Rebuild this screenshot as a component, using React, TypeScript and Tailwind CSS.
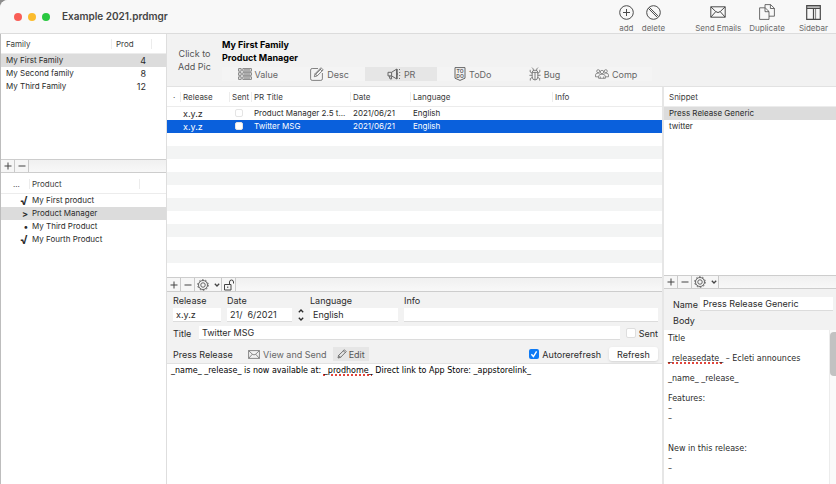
import type { ReactNode } from "react";
import clsx from "clsx";

interface ButtonProps {
  label: string;
  children: ReactNode;
}

const families = [
  { name: "My First Family", prod: 4 },
  { name: "My Second family", prod: 8 },
  { name: "My Third Family", prod: 12 },
];

const products = [
  { mark: "√", name: "My First product" },
  { mark: ">", name: "Product Manager" },
  { mark: "•", name: "My Third Product" },
  { mark: "√", name: "My Fourth Product" },
];

const releases = [
  { release: "x.y.z", title: "Product Manager 2.5 t...", date: "2021/06/21", language: "English" },
  { release: "x.y.z", title: "Twitter MSG", date: "2021/06/21", language: "English" },
];

const snippets = ["Press Release Generic", "twitter"];

const EnvelopeIcon = ({ className }: { className: string }) => (
  <svg className={className} viewBox="0 0 16 12" fill="none" stroke="currentColor" strokeLinejoin="round">
    <path d="M.8.8h14.4v10.4H.8z M.8.8l5 4.8q2.2 1.9 4.4 0l5-4.8 M.8 11.2l5-5.6 M15.2 11.2l-5-5.6" />
  </svg>
);

const GearIcon = () => (
  <svg className="size-3" viewBox="0 0 24 24" fill="none" stroke="currentColor" strokeWidth="1.6">
    <circle cx="12" cy="12" r="9" />
    <circle cx="12" cy="12" r="4.5" />
    <circle cx="12" cy="12" r="10.6" strokeWidth="1.6" strokeDasharray="3.33 3.33" />
  </svg>
);

const ChevronIcon = ({ up = false }: { up?: boolean }) => (
  <svg className="h-1 w-1.5" viewBox="0 0 6 4" fill="none" stroke="currentColor" strokeWidth="1.3">
    <path d={up ? "M.8 3.2L3 1l2.2 2.2" : "M.8.8L3 3 5.2.8"} />
  </svg>
);

const PencilIcon = () => (
  <svg className="size-2.5" viewBox="0 0 10 10" fill="none" stroke="currentColor" strokeWidth=".8" strokeLinejoin="round">
    <path d="M1 9l.6-2.6L7.4.8l1.8 1.8L3.5 8.4zM6.4 1.8l1.8 1.8M1.6 6.4l2 2" />
  </svg>
);

const tabs = [
  {
    name: "Value",
    icon: (
      <svg className="h-3 w-3.5" viewBox="0 0 14 12" fill="none" stroke="currentColor" strokeWidth=".8">
        <path d="M.6.6h2.6v2.6H.6zM.6 4.7h2.6v2.6H.6zM.6 8.8h2.6v2.6H.6zM4.8.6h8.6v2.6H4.8zM4.8 4.7h8.6v2.6H4.8zM4.8 8.8h8.6v2.6H4.8zM6 1.9h6M6 6h6M6 10.1h6" />
      </svg>
    ),
  },
  {
    name: "Desc",
    icon: (
      <svg className="size-3.5" viewBox="0 0 14 14" fill="none" stroke="currentColor" strokeWidth=".8" strokeLinejoin="round">
        <path d="M8 1.5H2.2Q.6 1.5.6 3v8.8q0 1.6 1.6 1.6h8.6q1.6 0 1.6-1.6V6M4.3 9.7l.8-3L11 .7l2.2 2.2-6 6zM9.8 1.9L12 4.1M5.1 6.7l2.1 2.2M5.7 7.3l5.2-5.3" />
      </svg>
    ),
  },
  {
    name: "PR",
    icon: (
      <svg className="h-3 w-3.5" viewBox="0 0 14 12" fill="none" stroke="currentColor" strokeLinejoin="round">
        <path d="M1 4.3h3.6v3.6H1zM4.6 4.3L9.8 1v10L4.6 7.9M2.2 7.9l.8 3h1.7l-.6-3M9.8 4.8q1.4 1.2 0 2.4M12 1.5l1 .1M12.2 4.5h1M12.2 7.5h1M12 10.4l1 .1" />
        <path d="M9.8 1v10" strokeWidth="1.6" />
      </svg>
    ),
  },
  {
    name: "ToDo",
    icon: (
      <svg className="h-3.5 w-3" viewBox="0 0 12 14" fill="none" stroke="currentColor">
        <path d="M1 .6h10v10.6l-5 2.2-5-2.2z" />
        <text x="6" y="5.8" textAnchor="middle" fontSize="5" fontWeight="700" fill="currentColor" stroke="none">TO</text>
        <text x="6" y="10.6" textAnchor="middle" fontSize="5" fontWeight="700" fill="currentColor" stroke="none">DO</text>
      </svg>
    ),
  },
  {
    name: "Bug",
    icon: (
      <svg className="h-3.5 w-3" viewBox="0 0 12 14" fill="none" stroke="currentColor" strokeWidth=".8">
        <path d="M3.2 5.2Q3.2 3.2 6 3.2t2.8 2v4.6Q8.8 13 6 13t-2.8-3.2zM3.2 5.4h5.6M6 5.4V13M4.5 3.2Q4.3 1.5 3 .6M7.5 3.2Q7.7 1.5 9 .6M3.2 6.3L1.2 5V2.8M8.8 6.3l2-1.3V2.8M.4 8.3h2.8M8.8 8.3h2.8M3.3 10.3l-2 1.3v2M8.7 10.3l2 1.3v2" />
      </svg>
    ),
  },
  {
    name: "Comp",
    icon: (
      <svg className="h-2.5 w-3.5" viewBox="0 0 14 10" fill="none" stroke="currentColor" strokeWidth=".7">
        <circle cx="7" cy="3" r="1.7" />
        <circle cx="3.2" cy="2.2" r="1.5" />
        <circle cx="10.8" cy="2.2" r="1.5" />
        <path d="M3.6 9.3V7.5Q3.6 5.2 7 5.2t3.4 2.3v1.8zM3.6 7.8H.5V6q0-1.9 2.7-1.9 1 0 1.5.3M10.4 7.8h3.1V6q0-1.9-2.7-1.9-1 0-1.5.3M5.3 7.5v1.8M8.7 7.5v1.8" />
      </svg>
    ),
  },
];

const ToolbarButton = ({ label, children }: ButtonProps) => (
  <button className="flex flex-col items-center text-[8px] leading-[10px] text-[#6b6b6b]">
    <span className="flex h-4 items-center text-[#4a4a4a]">{children}</span>
    <span className="mt-[3px]">{label}</span>
  </button>
);

const BarButton = ({ label, children }: ButtonProps) => (
  <button
    aria-label={label}
    className="flex h-full min-w-[14px] items-center justify-center gap-1 border-r border-[#c9c9c9] bg-[#f6f6f6] text-[#444]"
  >
    {children}
  </button>
);

const PlusMinus = () => (
  <>
    <BarButton label="Add">
      <svg className="size-2" viewBox="0 0 8 8" stroke="currentColor"><path d="M4 .5v7M.5 4h7" /></svg>
    </BarButton>
    <BarButton label="Remove">
      <svg className="size-2" viewBox="0 0 8 8" stroke="currentColor"><path d="M.5 4h7" /></svg>
    </BarButton>
  </>
);

const ActionsButton = () => (
  <BarButton label="Actions">
    <span className="flex w-[26px] items-center justify-between pr-px pl-[2px]">
      <GearIcon />
      <ChevronIcon />
    </span>
  </BarButton>
);

const barClass = "flex shrink-0 border-y border-[#cdcdcd] bg-gradient-to-b from-[#f0f0f0] to-[#f8f8f8]";
const thClass = "h-[19px] border-b border-[#ececec] p-0 pt-[2px] text-left font-normal text-[#3c3c3c]";
const fieldClass = "h-[14px] min-w-0 border-b border-[#dcdcdc] bg-white px-[3px] outline-none";

const Sidebar = () => (
  <aside className="flex w-[167px] shrink-0 flex-col border-r border-l border-[#dedede] border-l-[#bdbdbd] bg-white">
    <div className="h-[125px]">
      <table className="w-full table-fixed text-[8px] leading-[13px]">
        <colgroup>
          <col className="w-[110px]" />
          <col className="w-[40px]" />
          <col />
        </colgroup>
        <thead>
          <tr>
            <th className={thClass}><span className="pl-[5px]">Family</span></th>
            <th className={thClass}><span className="border-l border-[#ececec] pl-1">Prod</span></th>
            <th className={thClass}><span className="border-l border-[#ececec]" /></th>
          </tr>
        </thead>
        <tbody>
          {families.map((family, index) => (
            <tr key={family.name} className={clsx(index === 0 && "bg-[#dcdcdc]")}>
              <td className="p-0 pl-[5px]">{family.name}</td>
              <td className="p-0 pr-[5px] text-right text-[9px]">{family.prod}</td>
              <td className="p-0" />
            </tr>
          ))}
        </tbody>
      </table>
    </div>
    <div className={clsx(barClass, "h-[14px]")}>
      <PlusMinus />
    </div>
    <table className="mt-px w-full table-fixed text-[8px] leading-[13px]">
      <colgroup>
        <col className="w-[28px]" />
        <col className="w-[110px]" />
        <col />
      </colgroup>
      <thead>
        <tr>
          <th className={thClass}><span className="pl-3">...</span></th>
          <th className={thClass}><span className="border-l border-[#ececec] pl-[2px]">Product</span></th>
          <th className={thClass}><span className="border-l border-[#ececec]" /></th>
        </tr>
      </thead>
      <tbody>
        {products.map((product, index) => (
          <tr key={product.name} className={clsx(index === 1 && "bg-[#dcdcdc]")}>
            <td className="p-0 pr-px">
              <span
                className={clsx(
                  "block text-right leading-[13px] font-bold",
                  product.mark === "√" ? "text-[12px]" : "text-[9px]"
                )}
              >
                {product.mark}
              </span>
            </td>
            <td className="p-0 pl-[3px]" colSpan={2}>{product.name}</td>
          </tr>
        ))}
      </tbody>
    </table>
  </aside>
);

const ReleaseTable = () => (
  <div className="h-[190px] bg-white">
    <table className="w-full table-fixed text-[8px] leading-[13px]">
      <colgroup>
        <col className="w-[13px]" />
        <col className="w-[49px]" />
        <col className="w-[22px]" />
        <col className="w-[99px]" />
        <col className="w-[60px]" />
        <col className="w-[142px]" />
        <col />
      </colgroup>
      <thead>
        <tr>
          <th className={thClass}><span className="pl-[6px]">·</span></th>
          {["Release", "Sent", "PR Title", "Date", "Language", "Info"].map((name) => (
            <th key={name} className={thClass}>
              <span className="border-l border-[#ececec] pl-[2px]">{name}</span>
            </th>
          ))}
        </tr>
      </thead>
      <tbody>
        {releases.map((row, index) => (
          <tr key={row.title} className={clsx(index === 1 && "bg-[#0a60dc] text-white")}>
            <td className="p-0" />
            <td className="p-0 pl-[3px] text-[9px]">{row.release}</td>
            <td className="p-0">
              <input
                type="checkbox"
                aria-label={`${row.title} sent`}
                className="ml-[6px] block size-2 appearance-none rounded-[2px] border border-[#e4e4e4] bg-white"
              />
            </td>
            <td className="p-0 pl-[3px] whitespace-nowrap">{row.title}</td>
            <td className="p-0 pl-[3px]">{row.date}</td>
            <td className="p-0 pl-[3px]">{row.language}</td>
            <td className="p-0" />
          </tr>
        ))}
      </tbody>
    </table>
    <div className="h-[143px] bg-[repeating-linear-gradient(#fff_0_13px,#f3f4f4_13px_26px)]" />
  </div>
);

const ReleaseForm = () => (
  <form className="flex flex-col pt-px pr-1 pl-[6px]" onSubmit={(e) => e.preventDefault()}>
    <div className="flex items-end">
      <label className="flex w-[54px] flex-col pr-[6px] leading-[15px]">
        Release
        <input className={fieldClass} defaultValue="x.y.z" />
      </label>
      <label className="flex w-[65px] flex-col leading-[15px]">
        Date
        <input className={fieldClass} defaultValue="21/  6/2021" />
      </label>
      <div className="mx-1 flex h-[14px] w-[10px] flex-col items-center justify-center gap-1">
        <button type="button" aria-label="Next day" className="flex"><ChevronIcon up /></button>
        <button type="button" aria-label="Previous day" className="flex"><ChevronIcon /></button>
      </div>
      <label className="flex w-[88px] flex-col leading-[15px]">
        Language
        <input className={fieldClass} defaultValue="English" />
      </label>
      <label className="ml-[6px] flex flex-1 flex-col leading-[15px]">
        Info
        <input className={fieldClass} />
      </label>
    </div>
    <div className="mt-1 flex items-center">
      <label htmlFor="title" className="w-[26px]">Title</label>
      <input id="title" className={clsx(fieldClass, "flex-1")} defaultValue="Twitter MSG" />
      <label className="ml-[6px] flex items-center gap-[3px]">
        <input type="checkbox" className="size-[10px] appearance-none rounded-[2px] border border-[#dedede] bg-white" />
        Sent
      </label>
    </div>
    <div className="mt-[7px] mb-[2px] flex h-[14px] items-center">
      <span className="w-[75px]">Press Release</span>
      <button type="button" className="flex items-center gap-[3px] text-[#666]">
        <EnvelopeIcon className="h-[9px] w-3" />
        View and Send
      </button>
      <button type="button" className="ml-[6px] flex h-[14px] items-center gap-[2px] bg-[#e6e6e6] px-1 text-[#555]">
        <PencilIcon />
        Edit
      </button>
      <label className="ml-auto flex items-center gap-[3px]">
        <span className="grid size-[10px]">
          <input
            type="checkbox"
            defaultChecked
            className="peer col-start-1 row-start-1 size-[10px] appearance-none rounded-[2px] bg-white checked:bg-[#0f7bf5]"
          />
          <svg
            className="pointer-events-none invisible col-start-1 row-start-1 size-[10px] text-white peer-checked:visible"
            viewBox="0 0 10 10"
            fill="none"
            stroke="currentColor"
            strokeWidth="1.4"
          >
            <path d="M2.4 5.2l2 2.3 3.2-5.2" />
          </svg>
        </span>
        Autorerefresh
      </label>
      <button type="button" className="ml-2 h-[14px] w-[49px] rounded-[3px] bg-white shadow-sm">Refresh</button>
    </div>
  </form>
);

const misspelled = "underline decoration-[#e0453c] decoration-dotted decoration-2 underline-offset-1";
const bodyFont = "font-['DejaVu_Sans',sans-serif] text-[8px]";

const ReleasePane = () => (
  <main className="flex min-w-0 flex-1 flex-col">
    <ReleaseTable />
    <div className={clsx(barClass, "h-[15px]")}>
      <PlusMinus />
      <ActionsButton />
      <BarButton label="Unlock">
        <svg className="size-3" viewBox="0 0 12 12" fill="none" stroke="currentColor">
          <path d="M1.5 5.5h6.5v5.5H1.5zM6.5 5.5V3q0-2 2-2t2 2v1.5M4.75 7.5v1.5" />
        </svg>
      </BarButton>
    </div>
    <ReleaseForm />
    <div
      role="textbox"
      aria-label="Press Release"
      contentEditable
      suppressContentEditableWarning
      spellCheck={false}
      className={clsx("flex-1 border-t border-[#e2e2e2] bg-white px-1 leading-[13px] text-black outline-none", bodyFont)}
    >
      _name_ _release_ is now available at: <span className={misspelled}>_prodhome_</span> Direct link to App Store: _appstorelink_
    </div>
  </main>
);

const bodyLines = [
  "Title",
  "",
  <><span className={misspelled}>_releasedate_</span> – Ecleti announces</>,
  "",
  "_name_ _release_",
  "",
  "Features:",
  "–",
  "–",
  "",
  "",
  "New in this release:",
  "–",
  "–",
];

const SnippetPane = () => (
  <aside className="flex w-[174px] shrink-0 flex-col border-l-2 border-[#e6e6e6]">
    <div className="h-[188px] bg-white">
      <table className="w-full text-[8px] leading-[13px]">
        <thead>
          <tr>
            <th className={thClass}><span className="pl-[5px]">Snippet</span></th>
          </tr>
        </thead>
        <tbody>
          {snippets.map((snippet, index) => (
            <tr key={snippet} className={clsx(index === 0 && "bg-[#dcdcdc]")}>
              <td className="p-0 pl-[5px]">{snippet}</td>
            </tr>
          ))}
        </tbody>
      </table>
    </div>
    <div className={clsx(barClass, "h-[14px]")}>
      <PlusMinus />
      <ActionsButton />
    </div>
    <div className="flex items-center pt-2 pr-[3px] pl-[9px]">
      <label htmlFor="name" className="w-[27px]">Name</label>
      <input id="name" className={clsx(fieldClass, "flex-1")} defaultValue="Press Release Generic" />
    </div>
    <span id="body-label" className="my-[3px] pl-[9px]">Body</span>
    <div className="flex flex-1 bg-white">
      <div
        role="textbox"
        aria-labelledby="body-label"
        contentEditable
        suppressContentEditableWarning
        spellCheck={false}
        className={clsx("flex-1 pt-1 pl-1 leading-[10px] outline-none", bodyFont)}
      >
        {bodyLines.map((line, index) => (
          <div key={index} className="min-h-[10px]">{line}</div>
        ))}
      </div>
      <div className="w-[7px] border-l border-[#ececec] bg-[#fafafa] pt-[2px]">
        <div className="h-11 rounded-l bg-[#c2c2c2]" />
      </div>
    </div>
  </aside>
);

const App = () => {
  return (
    <div className="bg-[#8e8e8e]">
      <div className="flex min-h-screen flex-col overflow-hidden rounded-tl-lg bg-[#f2f2f2] font-['Inter',sans-serif] text-[9px] leading-[13px] text-[#2b2b2b]">
        <header className="flex h-[34px] items-center border-b border-[#dcdcdc] bg-[#f8f8f8] pr-2 pl-[14px]">
          <div className="flex gap-[6px]">
            <button aria-label="Close" className="size-2 rounded-full bg-[#f95e57]" />
            <button aria-label="Minimize" className="size-2 rounded-full bg-[#fbbc2e]" />
            <button aria-label="Zoom" className="size-2 rounded-full bg-[#29c840]" />
          </div>
          <h1 className="ml-3 text-[10px] font-semibold text-[#444]">Example 2021.prdmgr</h1>
          <div className="mt-1 ml-auto flex items-start">
            <ToolbarButton label="add">
              <svg className="size-[15px]" viewBox="0 0 15 15" fill="none" stroke="currentColor">
                <path d="M7.5 4v7M4 7.5h7" />
                <circle cx="7.5" cy="7.5" r="6.8" />
              </svg>
            </ToolbarButton>
            <span className="w-2" />
            <ToolbarButton label="delete">
              <svg className="size-[15px]" viewBox="0 0 15 15" fill="none" stroke="currentColor">
                <circle cx="7.5" cy="7.5" r="6.8" />
                <path d="M2.3 3.3l8.9 9M3.3 2.3l9 8.9" />
              </svg>
            </ToolbarButton>
            <span className="w-[30px]" />
            <ToolbarButton label="Send Emails"><EnvelopeIcon className="h-3 w-4" /></ToolbarButton>
            <span className="w-2" />
            <ToolbarButton label="Duplicate">
              <svg className="size-4" viewBox="0 0 16 16" fill="none" stroke="currentColor" strokeWidth=".8" strokeLinejoin="round">
                <path d="M6 3.5V.6h5.6l3.8 3.7v7.9H10M11.4.6v3.9h4M.6 3.8h5.6L10 7.5v7.9H.6zM6 3.8v3.9h4" />
              </svg>
            </ToolbarButton>
            <span className="w-[14px]" />
            <ToolbarButton label="Sidebar">
              <svg className="size-[15px]" viewBox="0 0 15 15" fill="none" stroke="currentColor">
                <path d="M.7.7h13.6v13.6H.7zM.7 3.5h13.6M7.5 3.5v10.8" strokeWidth="1.2" />
                <path d="M.7 2h13.6M9.6 3.5v10.8" strokeWidth=".7" />
              </svg>
            </ToolbarButton>
          </div>
        </header>

        <div className="flex flex-1">
          <Sidebar />
          <div className="flex min-w-0 flex-1 flex-col">
            <div className="flex h-[53px] border-b border-[#e2e2e2]">
              <button className="w-[55px] text-center text-[#555]">
                Click to<br />Add Pic
              </button>
              <div className="flex flex-col pt-1">
                <h2 className="font-bold text-black">My First Family</h2>
                <h2 className="font-bold text-black">Product Manager</h2>
                <nav className="mt-[3px] grid w-[430px] grid-cols-6 bg-[#f4f4f4]">
                  {tabs.map((tab) => (
                    <button
                      key={tab.name}
                      className={clsx(
                        "flex h-[14px] items-center justify-center gap-[3px] text-[#666]",
                        tab.name === "PR" && "bg-[#e6e6e6]"
                      )}
                    >
                      {tab.icon}
                      {tab.name}
                    </button>
                  ))}
                </nav>
              </div>
            </div>
            <div className="flex flex-1">
              <ReleasePane />
              <SnippetPane />
            </div>
          </div>
        </div>
      </div>
    </div>
  );
};

export default App;
